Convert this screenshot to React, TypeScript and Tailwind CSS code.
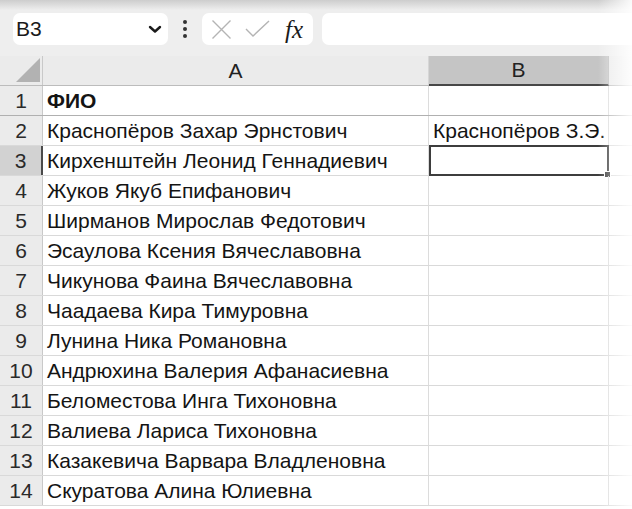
import React from 'react';

const names = [
  'Краснопёров Захар Эрнстович',
  'Кирхенштейн Леонид Геннадиевич',
  'Жуков Якуб Епифанович',
  'Ширманов Мирослав Федотович',
  'Эсаулова Ксения Вячеславовна',
  'Чикунова Фаина Вячеславовна',
  'Чаадаева Кира Тимуровна',
  'Лунина Ника Романовна',
  'Андрюхина Валерия Афанасиевна',
  'Беломестова Инга Тихоновна',
  'Валиева Лариса Тихоновна',
  'Казакевича Варвара Владленовна',
  'Скуратова Алина Юлиевна',
];

function FormulaBar() {
  return (
    <div className="h-[56px] bg-[#eeeeee] flex flex-col">
      <div className="h-[10px] bg-gradient-to-b from-[#cdcdcd] to-[#eeeeee]" />
      <div className="flex items-center h-[32px] mt-[3px] pl-[13px]">
        <div className="w-[155px] h-[32px] bg-white rounded-[7px] flex items-center pl-[3px] pr-[6px] justify-between">
          <span className="text-[21px] text-[#1a1a1a]">B3</span>
          <svg width="14" height="10" viewBox="0 0 14 10">
            <path d="M2 3 L7 7.5 L12 3" fill="none" stroke="#1a1a1a" strokeWidth="2.4" strokeLinecap="round" strokeLinejoin="round" />
          </svg>
        </div>
        <div className="w-[34px] flex flex-col items-center gap-[3px]">
          <span className="w-[4px] h-[4px] rounded-full bg-[#333]" />
          <span className="w-[4px] h-[4px] rounded-full bg-[#333]" />
          <span className="w-[4px] h-[4px] rounded-full bg-[#333]" />
        </div>
        <div className="w-[111px] h-[32px] bg-white rounded-[7px] flex items-center pl-[9px]">
          <svg width="21" height="21" viewBox="0 0 21 21">
            <path d="M1.5 1.5 L19.5 19.5 M19.5 1.5 L1.5 19.5" stroke="#b4b4b4" strokeWidth="1.4" />
          </svg>
          <svg className="ml-[13px]" width="25" height="18" viewBox="0 0 25 18">
            <path d="M1 9 L8 16 L24 1" fill="none" stroke="#b4b4b4" strokeWidth="1.4" />
          </svg>
          <span className="ml-[15px] text-[25px] italic leading-none text-[#1a1a1a] font-['Liberation_Serif',serif]">fx</span>
        </div>
        <div className="ml-[9px] flex-1 h-[32px] bg-white rounded-l-[7px]" />
      </div>
    </div>
  );
}

function ColumnHeader() {
  return (
    <div className="flex h-[30px] bg-[#ebebeb] border-b border-[#bcbcbc]">
      <div className="w-[43px] border-r border-[#c9c9c9] flex items-end justify-end pr-[2px] pb-[3px]">
        <svg width="24" height="24" viewBox="0 0 24 24">
          <path d="M24 0 L24 24 L0 24 Z" fill="#b2b2b2" />
        </svg>
      </div>
      <div className="w-[386px] border-r border-[#d6d6d6] flex items-center justify-center text-[21px] text-[#222]">A</div>
      <div className="w-[180px] bg-[#c5c5c5] border-r border-[#bdbdbd] border-b-2 border-b-[#474747] -mb-px flex items-center justify-center text-[21px] text-[#222]">B</div>
      <div className="flex-1" />
    </div>
  );
}

function Row({ n, a, b, bold }: { n: number; a?: string; b?: string; bold?: boolean }) {
  const active = n === 3;
  return (
    <div className={`flex h-[30px] border-b ${n === 1 ? 'border-[#b0b0b0]' : 'border-[#d9d9d9]'}`}>
      <div
        className={`w-[43px] flex items-center justify-center text-[21px] text-[#2a2a2a] ${
          active ? 'bg-[#d2d2d2] border-r-2 border-[#4a4a4a]' : 'bg-[#ebebeb] border-r border-[#c9c9c9]'
        }`}
      >
        {n}
      </div>
      <div className={`w-[386px] border-r border-[#dcdcdc] flex items-center pl-[4px] text-[21px] text-[#141414] whitespace-nowrap ${bold ? 'font-bold' : ''}`}>
        {a}
      </div>
      <div className="w-[180px] border-r border-[#dcdcdc] flex items-center pl-[4px] text-[21px] text-[#141414] whitespace-nowrap relative">
        {b}
        {active && (
          <div className="absolute left-0 top-[-1px] right-[-1px] bottom-[-1px] border-2 border-[#3d3d3d]">
            <div className="absolute right-[-4px] bottom-[-4px] w-[7px] h-[7px] bg-[#3d3d3d] border border-white" />
          </div>
        )}
      </div>
      <div className="flex-1" />
    </div>
  );
}

export default function App() {
  return (
    <div className="w-[632px] h-[509px] overflow-hidden relative bg-white font-['Liberation_Sans',Arial,sans-serif]">
      <FormulaBar />
      <ColumnHeader />
      <Row n={1} a="ФИО" bold />
      <Row n={2} a={names[0]} b="Краснопёров З.Э." />
      {names.slice(1).map((name, i) => (
        <Row key={name} n={i + 3} a={name} />
      ))}
      <div className="absolute right-0 top-0 bottom-0 w-[34px] bg-gradient-to-r from-transparent to-white/90 pointer-events-none" />
    </div>
  );
}
